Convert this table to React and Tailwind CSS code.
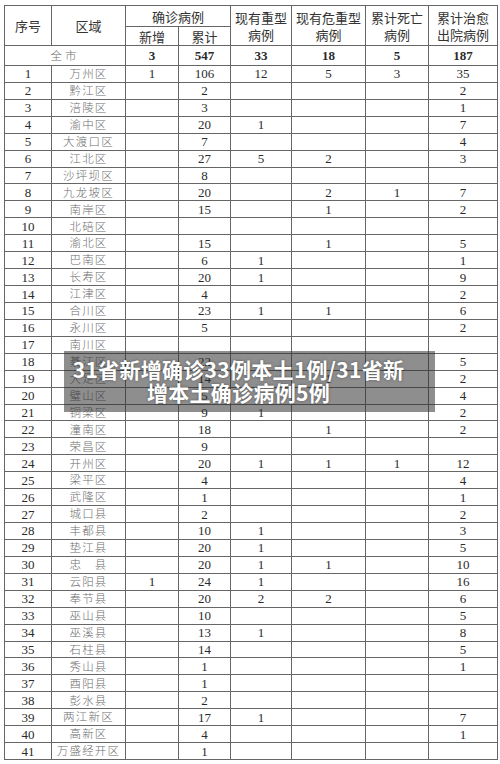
const rows = [
  [1, "万州区", "1", "106", "12", "5", "3", "35"],
  [2, "黔江区", "", "2", "", "", "", "2"],
  [3, "涪陵区", "", "3", "", "", "", "1"],
  [4, "渝中区", "", "20", "1", "", "", "7"],
  [5, "大渡口区", "", "7", "", "", "", "4"],
  [6, "江北区", "", "27", "5", "2", "", "3"],
  [7, "沙坪坝区", "", "8", "", "", "", ""],
  [8, "九龙坡区", "", "20", "", "2", "1", "7"],
  [9, "南岸区", "", "15", "", "1", "", "2"],
  [10, "北碚区", "", "", "", "", "", ""],
  [11, "渝北区", "", "15", "", "1", "", "5"],
  [12, "巴南区", "", "6", "1", "", "", "1"],
  [13, "长寿区", "", "20", "1", "", "", "9"],
  [14, "江津区", "", "4", "", "", "", "2"],
  [15, "合川区", "", "23", "1", "1", "", "6"],
  [16, "永川区", "", "5", "", "", "", "2"],
  [17, "南川区", "", "", "", "", "", ""],
  [18, "綦江区", "", "22", "", "", "", "5"],
  [19, "大足区", "", "14", "", "1", "", "2"],
  [20, "璧山区", "", "5", "", "", "", "4"],
  [21, "铜梁区", "", "9", "1", "", "", "2"],
  [22, "潼南区", "", "18", "", "1", "", "2"],
  [23, "荣昌区", "", "9", "", "", "", ""],
  [24, "开州区", "", "20", "1", "1", "1", "12"],
  [25, "梁平区", "", "4", "", "", "", "4"],
  [26, "武隆区", "", "1", "", "", "", "1"],
  [27, "城口县", "", "2", "", "", "", "2"],
  [28, "丰都县", "", "10", "1", "", "", "3"],
  [29, "垫江县", "", "20", "1", "", "", "5"],
  [30, "忠　县", "", "20", "1", "1", "", "10"],
  [31, "云阳县", "1", "24", "1", "", "", "16"],
  [32, "奉节县", "", "20", "2", "2", "", "6"],
  [33, "巫山县", "", "10", "", "", "", "5"],
  [34, "巫溪县", "", "13", "1", "", "", "8"],
  [35, "石柱县", "", "14", "", "", "", "5"],
  [36, "秀山县", "", "1", "", "", "", "1"],
  [37, "酉阳县", "", "1", "", "", "", ""],
  [38, "彭水县", "", "2", "", "", "", ""],
  [39, "两江新区", "", "17", "1", "", "", "7"],
  [40, "高新区", "", "4", "", "", "", "1"],
  [41, "万盛经开区", "", "1", "", "", "", ""],
];

const cjk = "font-['Noto_Sans_CJK_SC',sans-serif]";
const serif = "font-['Liberation_Serif',serif]";

function Head({ className = "", children }) {
  return (
    <div
      className={`bg-white flex items-center justify-center text-center text-[13px] leading-[17px] text-[#333] ${cjk} ${className}`}
    >
      {children}
    </div>
  );
}

function Num({ children, bold }) {
  return (
    <div
      className={`bg-white flex items-center justify-center text-[13px] leading-none text-[#2b2b2b] ${serif} ${bold ? "font-bold" : ""}`}
    >
      {children}
    </div>
  );
}

function Name({ children, className = "" }) {
  return (
    <div
      className={`bg-white flex items-center justify-center text-[11.5px] leading-none tracking-[1.2px] font-light text-[#6e6e6e] ${cjk} ${className}`}
    >
      {children}
    </div>
  );
}

export default function App() {
  return (
    <div className="relative w-[500px] h-[764px] bg-white overflow-hidden">
      <div className="ml-[4px] mt-[5px] w-[494px] h-[755px] p-px gap-px bg-[#666] grid grid-cols-[46px_73px_52px_51px_60px_73px_62px_68px] grid-rows-[20px_18px_19px_repeat(41,minmax(0,1fr))]">
        <Head className="row-span-2">序号</Head>
        <Head className="row-span-2">区域</Head>
        <Head className="col-span-2">确诊病例</Head>
        <Head className="row-span-2">现有重型<br />病例</Head>
        <Head className="row-span-2">现有危重型<br />病例</Head>
        <Head className="row-span-2">累计死亡<br />病例</Head>
        <Head className="row-span-2">累计治愈<br />出院病例</Head>
        <Head>新增</Head>
        <Head>累计</Head>

        <Name className="col-span-2 tracking-[3px]">全市</Name>
        <Num bold>3</Num>
        <Num bold>547</Num>
        <Num bold>33</Num>
        <Num bold>18</Num>
        <Num bold>5</Num>
        <Num bold>187</Num>

        {rows.map((r) => (
          <div key={r[0]} className="contents">
            <Num>{r[0]}</Num>
            <Name>{r[1]}</Name>
            <Num>{r[2]}</Num>
            <Num>{r[3]}</Num>
            <Num>{r[4]}</Num>
            <Num>{r[5]}</Num>
            <Num>{r[6]}</Num>
            <Num>{r[7]}</Num>
          </div>
        ))}
      </div>

      {/* caption banner over the table */}
      <div className="absolute left-[64px] top-[351px] w-[371px] h-[61px] bg-[rgba(50,50,50,0.55)] pl-2 pr-[30px] py-[7px] text-center">
        <p className={`text-white font-bold text-[21px] leading-[23px] tracking-[0.3px] ${cjk} [text-shadow:0_0_3px_rgba(0,0,0,0.4)]`}>
          31省新增确诊33例本土1例/31省新
          <br />
          增本土确诊病例5例
        </p>
      </div>
    </div>
  );
}
